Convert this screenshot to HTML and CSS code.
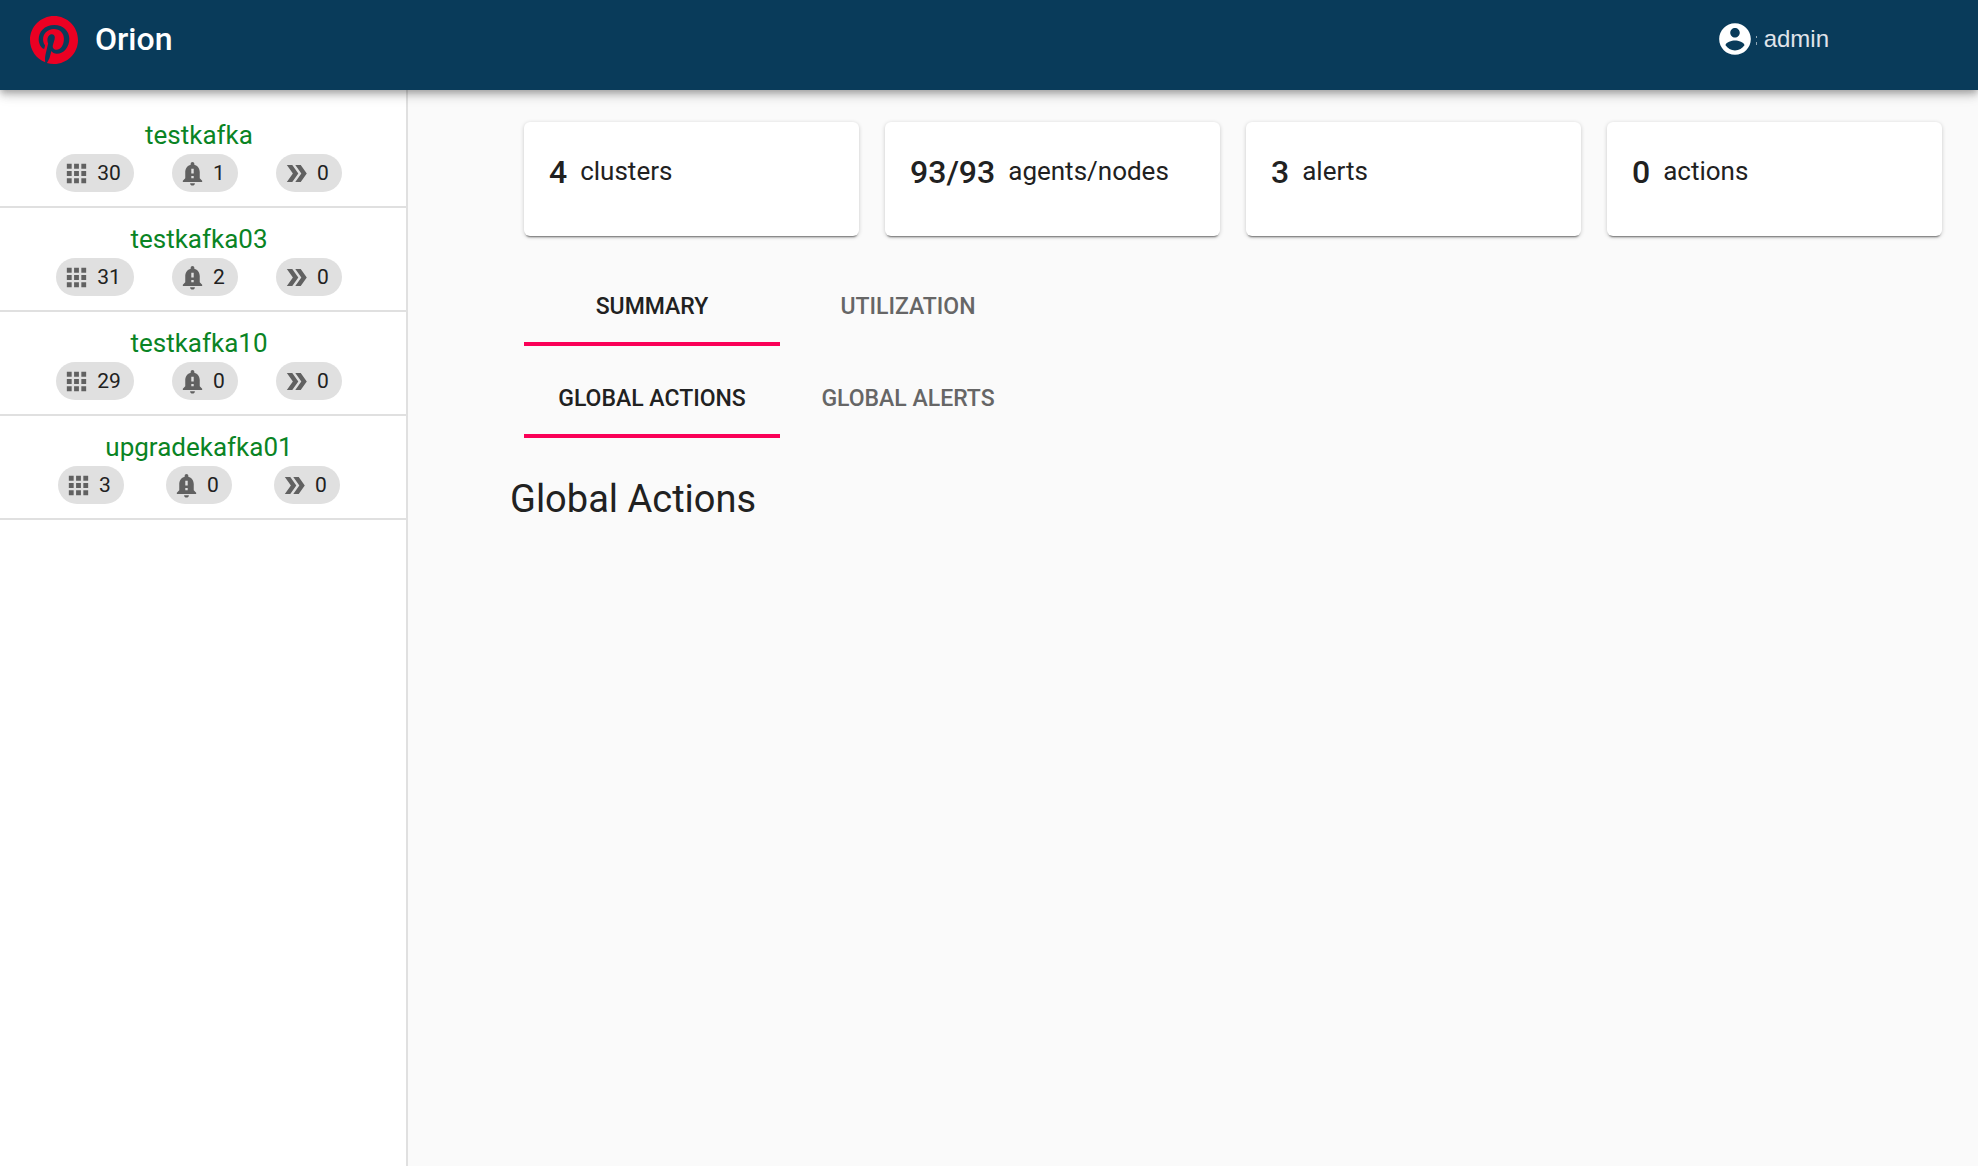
FILE: index.html
```html
<!DOCTYPE html>
<html lang="en">
<head>
<meta charset="utf-8">
<title>Orion</title>
<link rel="stylesheet" href="styles.css">
</head>
<body>
<svg class="sprite" aria-hidden="true">
  <symbol id="grid" viewBox="0 0 24 24"><path d="M4 8h4V4H4v4zm6 12h4v-4h-4v4zm-6 0h4v-4H4v4zm0-6h4v-4H4v4zm6 0h4v-4h-4v4zm6-10v4h4V4h-4zm-6 4h4V4h-4v4zm6 6h4v-4h-4v4zm0 6h4v-4h-4v4z"/></symbol>
  <symbol id="bell" viewBox="0 0 24 24"><path d="M18 16v-5c0-3.07-1.64-5.64-4.5-6.32V4c0-.83-.67-1.5-1.5-1.5s-1.5.67-1.5 1.5v.68C7.630 5.360 6 7.920 6 11v5l-2 2v1h16v-1l-2-2zm-5 0h-2v-2h2v2zm0-4h-2V8h2v4zm-1 10c1.1 0 2-.9 2-2h-4c0 1.100.89 2 2 2z"/></symbol>
  <symbol id="arrows" viewBox="0 0 24 24"><path d="M15.500 5H11l5 7-5 7h4.500l5-7z"/><path d="M8.500 5H4l5 7-5 7h4.500l5-7z"/></symbol>
</svg>
<header class="topbar">
  <a class="brand" href="#">
    <svg class="logo" viewBox="0 0 24 24" aria-hidden="true"><path d="M12 0C5.373 0 0 5.372 0 12c0 5.084 3.163 9.426 7.627 11.174-.105-.949-.2-2.405.042-3.441.218-.937 1.407-5.965 1.407-5.965s-.359-.719-.359-1.782c0-1.668.967-2.914 2.171-2.914 1.023 0 1.518.769 1.518 1.690 0 1.029-.655 2.568-.994 3.995-.283 1.194.599 2.169 1.777 2.169 2.133 0 3.772-2.249 3.772-5.495 0-2.873-2.064-4.882-5.012-4.882-3.414 0-5.418 2.561-5.418 5.207 0 1.031.397 2.138.893 2.738a.36.36 0 0 1 .083.345l-.333 1.360c-.053.220-.174.267-.402.161-1.499-.698-2.436-2.889-2.436-4.649 0-3.785 2.750-7.262 7.929-7.262 4.163 0 7.398 2.967 7.398 6.931 0 4.136-2.607 7.464-6.227 7.464-1.216 0-2.359-.631-2.750-1.378l-.748 2.853c-.271 1.043-1.002 2.350-1.492 3.146 1.124.347 2.317.535 3.554.535 6.627 0 12-5.373 12-12S18.627 0 12 0z"/></svg>
    <span>Orion</span>
  </a>
  <button class="account" type="button">
    <svg class="avatar" viewBox="0 0 24 24" aria-hidden="true"><path d="M12 2C6.480 2 2 6.480 2 12s4.480 10 10 10 10-4.480 10-10S17.520 2 12 2zm0 3c1.660 0 3 1.340 3 3s-1.340 3-3 3-3-1.340-3-3 1.340-3 3-3zm0 14.200c-2.500 0-4.710-1.280-6-3.220.03-1.990 4-3.080 6-3.080 1.990 0 5.970 1.090 6 3.080-1.290 1.940-3.500 3.220-6 3.220z"/></svg>
    <svg class="mark" viewBox="0 0 2 12" aria-hidden="true"><path d="M0 1h1v2H0zM0 7h1v3H0z"/></svg>
    <span>admin</span>
  </button>
</header>
<div class="layout">
  <nav class="sidebar" aria-label="Clusters">
    <ul class="clusters">
      <li class="cluster">
        <a class="name" href="#">testkafka</a>
        <div class="chips">
          <span class="chip"><svg><use href="#grid"/></svg>30</span>
          <span class="chip"><svg><use href="#bell"/></svg>1</span>
          <span class="chip"><svg><use href="#arrows"/></svg>0</span>
        </div>
      </li>
      <li class="cluster">
        <a class="name" href="#">testkafka03</a>
        <div class="chips">
          <span class="chip"><svg><use href="#grid"/></svg>31</span>
          <span class="chip"><svg><use href="#bell"/></svg>2</span>
          <span class="chip"><svg><use href="#arrows"/></svg>0</span>
        </div>
      </li>
      <li class="cluster">
        <a class="name" href="#">testkafka10</a>
        <div class="chips">
          <span class="chip"><svg><use href="#grid"/></svg>29</span>
          <span class="chip"><svg><use href="#bell"/></svg>0</span>
          <span class="chip"><svg><use href="#arrows"/></svg>0</span>
        </div>
      </li>
      <li class="cluster">
        <a class="name" href="#">upgradekafka01</a>
        <div class="chips">
          <span class="chip"><svg><use href="#grid"/></svg>3</span>
          <span class="chip"><svg><use href="#bell"/></svg>0</span>
          <span class="chip"><svg><use href="#arrows"/></svg>0</span>
        </div>
      </li>
    </ul>
  </nav>
  <main class="content">
    <section class="cards" aria-label="Totals">
      <div class="card"><strong>4</strong><span>clusters</span></div>
      <div class="card"><strong>93/93</strong><span>agents/nodes</span></div>
      <div class="card"><strong>3</strong><span>alerts</span></div>
      <div class="card"><strong>0</strong><span>actions</span></div>
    </section>
    <div class="tabs" role="tablist">
      <button class="tab active" type="button" role="tab" aria-selected="true">Summary</button>
      <button class="tab" type="button" role="tab" aria-selected="false">Utilization</button>
    </div>
    <div class="tabs" role="tablist">
      <button class="tab active" type="button" role="tab" aria-selected="true">Global Actions</button>
      <button class="tab" type="button" role="tab" aria-selected="false">Global Alerts</button>
    </div>
    <h1 class="title">Global Actions</h1>
  </main>
</div>
</body>
</html>
```
FILE: styles.css
```css
* { box-sizing: border-box; }

body {
  margin: 0;
  min-height: 100vh;
  display: flex;
  flex-direction: column;
  background: #fafafa;
  color: #212121;
  font-family: Roboto, "Liberation Sans", sans-serif;
}

button {
  border: 0;
  padding: 0;
  background: none;
  font: inherit;
  cursor: pointer;
}

a { text-decoration: none; }

.sprite { display: none; }

.topbar {
  position: relative;
  display: flex;
  justify-content: space-between;
  align-items: flex-start;
  height: 90px;
  padding: 16px 149px 0 30px;
  background: #093b5a;
  box-shadow: 0 3px 6px -1px rgba(0, 0, 0, .2), 0 6px 8px rgba(0, 0, 0, .14), 0 2px 16px rgba(0, 0, 0, .12);
}

.brand {
  display: flex;
  align-items: center;
  gap: 17px;
  height: 48px;
  color: #fff;
  font-size: 32px;
  font-weight: 500;
  line-height: 48px;
}

.brand span { padding-bottom: 2px; }

.logo {
  width: 48px;
  height: 48px;
  fill: #eb0023;
}

.account {
  display: flex;
  align-items: center;
  height: 46px;
  color: #e0e4ea;
  font-family: "Liberation Sans", Arial, sans-serif;
  font-size: 24px;
}

.avatar {
  width: 38px;
  height: 38px;
  fill: #fff;
}

.mark {
  width: 2px;
  height: 12px;
  margin: 4px 6px 0 2px;
  fill: #8fa5b4;
}

.layout {
  flex: 1;
  display: flex;
}

.sidebar {
  flex: 0 0 408px;
  padding-top: 14px;
  background: #fff;
  border-right: 2px solid #e0e0e0;
}

.clusters {
  margin: 0;
  padding: 0;
  list-style: none;
}

.cluster {
  padding: 12px 45px 14px 37px;
  border-bottom: 2px solid #e0e0e0;
}

.name {
  display: block;
  color: #0a8424;
  font-size: 26px;
  line-height: 38px;
  text-align: center;
}

.chips {
  display: flex;
  justify-content: space-around;
}

.chip {
  display: flex;
  align-items: center;
  gap: 6px;
  height: 38px;
  padding: 0 13px 0 6px;
  border-radius: 19px;
  background: #e0e0e0;
  font-size: 21px;
}

.chip svg {
  width: 29px;
  height: 29px;
  fill: #616161;
}

.content {
  flex: 1;
  min-width: 0;
  padding: 32px 36px 32px 102px;
}

.cards {
  display: grid;
  grid-template-columns: repeat(4, 1fr);
  gap: 26px;
  margin: 0 0 33px 14px;
}

.card {
  display: flex;
  align-items: flex-start;
  gap: 13px;
  padding: 26px 25px 40px;
  border-radius: 6px;
  background: #fff;
  box-shadow: 0 3px 2px -2px rgba(0, 0, 0, .5), 0 1px 4px rgba(0, 0, 0, .2);
}

.card strong {
  font-size: 32px;
  font-weight: 500;
  line-height: 48px;
}

.card span {
  font-size: 26px;
  line-height: 46px;
}

.tabs {
  display: flex;
  margin: 0 0 15px 14px;
}

.tab {
  width: 256px;
  height: 77px;
  padding-top: 2px;
  border-bottom: 4px solid transparent;
  color: #666;
  font-size: 23px;
  font-weight: 500;
  text-transform: uppercase;
}

.tab.active {
  border-bottom-color: #fa0057;
  color: #212121;
}

.title {
  margin: 36px 0 0;
  font-size: 38px;
  font-weight: 400;
  line-height: 50px;
}
```
